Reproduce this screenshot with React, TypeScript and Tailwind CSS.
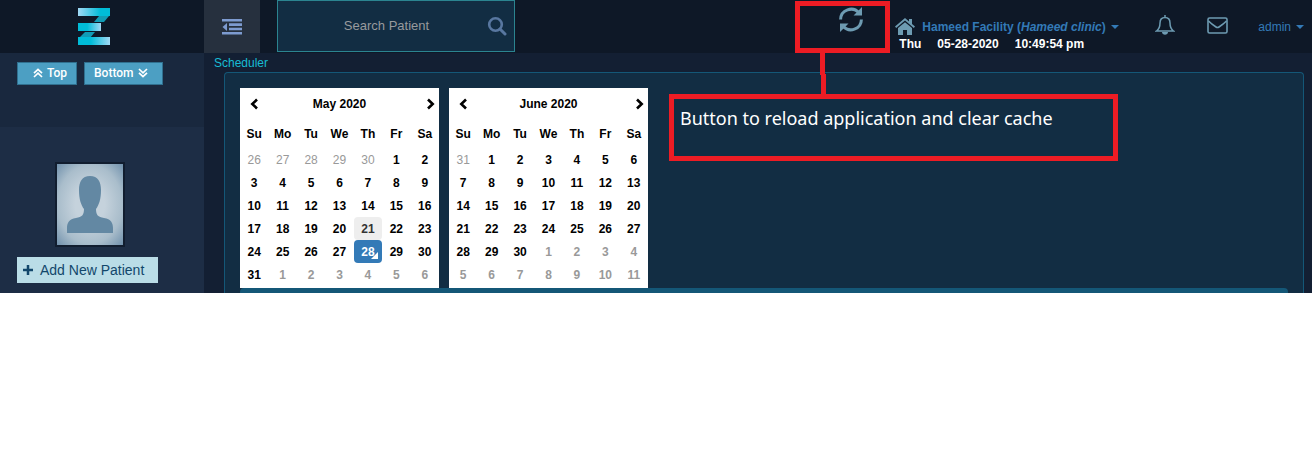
import type { ReactNode } from "react";

const DAYS = ["Su", "Mo", "Tu", "We", "Th", "Fr", "Sa"];

type Tone = "faded" | "faded-bold" | "normal" | "hovered" | "today";
type Day = { label: number; tone: Tone };

const run = (from: number, to: number, tone: Tone): Day[] =>
  Array.from({ length: to - from + 1 }, (_, i) => ({ label: from + i, tone }));

const MAY: Day[] = [
  ...run(26, 30, "faded"),
  ...run(1, 20, "normal"),
  { label: 21, tone: "hovered" },
  ...run(22, 27, "normal"),
  { label: 28, tone: "today" },
  ...run(29, 31, "normal"),
  ...run(1, 6, "faded-bold"),
];

const JUNE: Day[] = [
  ...run(31, 31, "faded"),
  ...run(1, 30, "normal"),
  ...run(1, 11, "faded-bold"),
];

const TONES: Record<Tone, string> = {
  faded: "font-normal text-[#999999]",
  "faded-bold": "font-bold text-[#999999]",
  normal: "font-bold text-black",
  hovered: "rounded bg-[#eeeeee] font-bold text-[#333333]",
  today: "rounded bg-[#337ab7] font-bold text-white",
};

function Chevron({ flip = false }: { flip?: boolean }) {
  return (
    <svg viewBox="0 0 8 12" className={flip ? "h-3 w-2 rotate-180" : "h-3 w-2"} aria-hidden="true">
      <path d="M7 1.5 2.3 6 7 10.5" fill="none" stroke="black" strokeWidth="2.6" />
    </svg>
  );
}

function Month({ title, days }: { title: string; days: Day[] }) {
  const weeks = Array.from({ length: days.length / 7 }, (_, i) => days.slice(i * 7, i * 7 + 7));
  return (
    <section className="w-[199px] bg-white pb-0.5 text-xs font-bold text-black">
      <header className="flex h-8 items-center pr-1 pl-2.5">
        <button type="button" aria-label="Previous month"><Chevron /></button>
        <h2 className="flex-1 pr-1.5 text-center">{title}</h2>
        <button type="button" aria-label="Next month"><Chevron flip /></button>
      </header>
      <table className="w-full table-fixed border-collapse text-center">
        <thead>
          <tr className="h-7">
            {DAYS.map((d) => (
              <th key={d} scope="col" className="p-0">{d}</th>
            ))}
          </tr>
        </thead>
        <tbody>
          {weeks.map((week, w) => (
            <tr key={w} className="h-[23px]">
              {week.map((day, i) => (
                <td key={i} className="p-0">
                  <button type="button" className={`relative block h-[23px] w-full ${TONES[day.tone]}`}>
                    {day.label}
                    {day.tone === "today" && (
                      <svg viewBox="0 0 7 7" className="absolute right-1 bottom-1 size-[7px]" aria-hidden="true">
                        <path d="M7 0v7H0z" fill="white" />
                      </svg>
                    )}
                  </button>
                </td>
              ))}
            </tr>
          ))}
        </tbody>
      </table>
    </section>
  );
}

function Logo() {
  return (
    <svg viewBox="0 0 32 38" className="h-[38px] w-8" role="img" aria-label="Z">
      <defs>
        <linearGradient id="a"><stop stopColor="#a2d9f5" /><stop offset=".7" stopColor="#00bcd8" /></linearGradient>
        <linearGradient id="b"><stop offset=".4" stopColor="#00bcd8" /><stop offset="1" stopColor="#a2d9f5" /></linearGradient>
      </defs>
      <path d="M21 8h10l-5 6H16z" fill="#109cb5" />
      <path d="M7 24h10l-5 6H1z" fill="#109cb5" />
      <path d="M0 0h32v8H0z" fill="url(#a)" />
      <path d="M0 15h23v8H0z" fill="url(#b)" />
      <path d="M0 29h32v8H0z" fill="url(#b)" />
    </svg>
  );
}

function DoubleChevron({ down = false }: { down?: boolean }) {
  return (
    <svg viewBox="0 0 10 10" className={down ? "size-2.5 rotate-180" : "size-2.5"} aria-hidden="true">
      <path d="M1 5.2 5 1.4l4 3.8M1 9l4-3.8L9 9" fill="none" stroke="white" strokeWidth="1.7" />
    </svg>
  );
}

function Caret() {
  return (
    <svg viewBox="0 0 8 4" className="h-1 w-2" aria-hidden="true">
      <path d="M0 0h8L4 4z" fill="#337ab7" />
    </svg>
  );
}

function StepButton({ children }: { children: ReactNode }) {
  return (
    <button type="button" className="flex h-[23px] items-center gap-1 border border-[#30708f] bg-[#4c9fc3] pb-0.5 font-[Roboto,sans-serif] text-xs font-medium text-white first:w-[60px] first:pl-[15px] last:w-[79px] last:pl-[9px]">
      {children}
    </button>
  );
}

function Topbar() {
  return (
    <header className="flex h-[53px] bg-[#0e1827]">
      <a href="#home" className="flex w-[204px] shrink-0 items-start pt-2 pl-[78px]"><Logo /></a>
      <button type="button" aria-label="Toggle sidebar" className="flex w-14 shrink-0 items-center justify-center bg-[#26303e]">
        <svg viewBox="0 0 20 16" className="h-4 w-5" fill="#7d9bd0" aria-hidden="true">
          <path d="M0 0h20v2.600H0zM7 4.300h13v2.600H7zM7 8.700h13v2.600H7zM0 13h20v2.600H0zM5 4v8L0.500 8z" />
        </svg>
      </button>
      <label className="ml-[17px] flex h-[52px] w-[238px] shrink-0 items-center border border-[#2b8490] bg-[#122d43] pr-[7px]">
        <input type="text" aria-label="Search Patient" placeholder="Search Patient" className="min-w-0 flex-1 bg-transparent pl-2 text-center text-[13px] text-white outline-none placeholder:text-[#989a9d]" />
        <svg viewBox="0 0 20 20" className="size-5" fill="none" stroke="#5877a0" aria-hidden="true">
          <circle cx="8.500" cy="8.500" r="6.300" strokeWidth="2.600" />
          <path d="m13 13 5 5" strokeWidth="3" strokeLinecap="round" />
        </svg>
      </label>
      <div className="ml-auto flex items-start">
        <div className="relative mt-px mr-[5px] h-[52px] w-[95px] border-[5px] border-[#ed1c24]">
          <button type="button" aria-label="Reload application" className="mt-px ml-[39px] block">
            <svg viewBox="0 0 24 25" className="h-[25px] w-6" fill="none" stroke="#6d9bb2" strokeWidth="3" aria-hidden="true">
              <path d="M1.600 12.500A10.400 10.400 0 0 1 20 6" />
              <path d="M22.400 12.500A10.400 10.400 0 0 1 4 19" />
              <path d="M23 0v8.500h-8.500zM1 25v-8.500h8.500z" fill="#6d9bb2" stroke="none" />
            </svg>
          </button>
          <div className="absolute top-[47px] left-5 h-[22px] w-[5px] bg-[#ed1c24]" />
          <div className="absolute top-[68px] left-[21px] h-[21px] w-[5px] bg-[#ed1c24]" />
        </div>
        <div className="w-[260px] pt-[17px] text-xs">
          <a href="#facility" className="flex h-[19px] items-center font-bold text-[#337ab7]">
            <svg viewBox="0 0 20 17" className="mr-[7px] h-[17px] w-5" fill="#6d9bb2" aria-hidden="true">
              <path d="M10 0 0 8.500 1.200 10 10 2.600 18.800 10 20 8.500 17 6V1h-3v2.500zM3 10v7h5v-5h4v5h5v-7l-7-5.800z" />
            </svg>
            <span>Hameed Facility (<i>Hameed clinic</i>)</span>
            <span className="ml-[5px]"><Caret /></span>
          </a>
          <div className="flex h-4 items-center gap-4 pl-1 font-bold text-white">
            <span>Thu</span><span>05-28-2020</span><span>10:49:54 pm</span>
          </div>
        </div>
        <button type="button" aria-label="Notifications" className="mt-[15px]">
          <svg viewBox="0 0 20 20" className="size-5" fill="none" stroke="#6d9bb2" strokeWidth="1.500" aria-hidden="true">
            <path d="M10 0v2M1.500 16c3-2 3.500-4 3.500-8 0-3 1.500-5.500 5-5.500S15 5 15 8c0 4 .500 6 3.500 8z" />
            <path d="M7 17h6c0 3.500-6 3.500-6 0z" fill="#6d9bb2" stroke="none" />
          </svg>
        </button>
        <button type="button" aria-label="Messages" className="mt-[17px] ml-8">
          <svg viewBox="0 0 21 17" className="h-[17px] w-[21px]" fill="none" stroke="#6d9bb2" strokeWidth="1.600" aria-hidden="true">
            <rect x="1" y="1" width="19" height="15" rx="1.500" />
            <path d="M1.500 4c3 3 6 5 7.500 6 1 .700 2 .700 3 0 1.500-1 4.500-3 7.500-6" />
          </svg>
        </button>
        <a href="#admin" className="mt-[17px] mr-2 ml-[30px] flex h-[19px] items-center gap-[5px] text-xs text-[#337ab7]">
          admin <Caret />
        </a>
      </div>
    </header>
  );
}

function Sidebar() {
  return (
    <aside className="w-[204px] shrink-0 bg-[#1d2d45]">
      <div className="flex h-[74px] items-start gap-[7px] bg-[#19283e] pt-[9px] pl-[17px]">
        <StepButton><DoubleChevron />Top</StepButton>
        <StepButton>Bottom<DoubleChevron down /></StepButton>
      </div>
      <div className="flex flex-col pt-[35px] pl-[17px]">
        <svg viewBox="0 0 70 85" className="ml-[38px] h-[85px] w-[70px]" role="img" aria-label="Patient photo">
          <defs>
            <radialGradient id="glow" r=".75">
              <stop offset=".3" stopColor="#c5d2dc" /><stop offset=".65" stopColor="#a9bdcb" /><stop offset="1" stopColor="#6588a6" />
            </radialGradient>
          </defs>
          <path d="M0 0h70v85H0z" fill="#111d2f" />
          <path d="M2 2h66v81H2z" fill="url(#glow)" />
          <path d="M35 14c8 0 11 6 11 14 0 9-2 15-5 19 0 6 2 8 8 9 7 1 9 5 9 10v5H12v-5c0-5 2-9 9-10 6-1 8-3 8-9-3-4-5-10-5-19 0-8 3-14 11-14z" fill="#6388a3" />
        </svg>
        <button type="button" className="mt-2.5 flex h-[26px] w-[141px] items-center gap-[7px] bg-[#badde7] pl-1.5 text-sm text-[#12476b]">
          <svg viewBox="0 0 10 10" className="size-2.5" aria-hidden="true">
            <path d="M5 0v10M0 5h10" stroke="#12476b" strokeWidth="2.500" />
          </svg>
          Add New Patient
        </button>
      </div>
    </aside>
  );
}

export default function App() {
  return (
    <div className="min-h-screen bg-white font-['Liberation_Sans',Arial,sans-serif]">
      <Topbar />
      <div className="flex h-60 overflow-hidden">
        <Sidebar />
        <main className="flex min-w-0 flex-1 flex-col bg-[#131f33]">
          <h1 className="h-[19px] pl-2.5 text-xs leading-5 text-[#18bcd4]">Scheduler</h1>
          <div className="mr-2 ml-5 flex flex-1 flex-col rounded-t border border-b-0 border-[#145777] bg-[#122d43] px-[15px] pt-[15px]">
            <div className="flex items-start gap-2.5">
              <Month title="May 2020" days={MAY} />
              <Month title="June 2020" days={JUNE} />
              <p className="mt-1.5 ml-[11px] h-[67px] w-[449px] border-[5px] border-[#ed1c24] px-1.5 pt-[5px] font-['Noto_Sans',sans-serif] text-lg text-white">
                Button to reload application and clear cache
              </p>
            </div>
            <div className="flex-1 rounded-t bg-[#145777]" />
          </div>
        </main>
      </div>
    </div>
  );
}
